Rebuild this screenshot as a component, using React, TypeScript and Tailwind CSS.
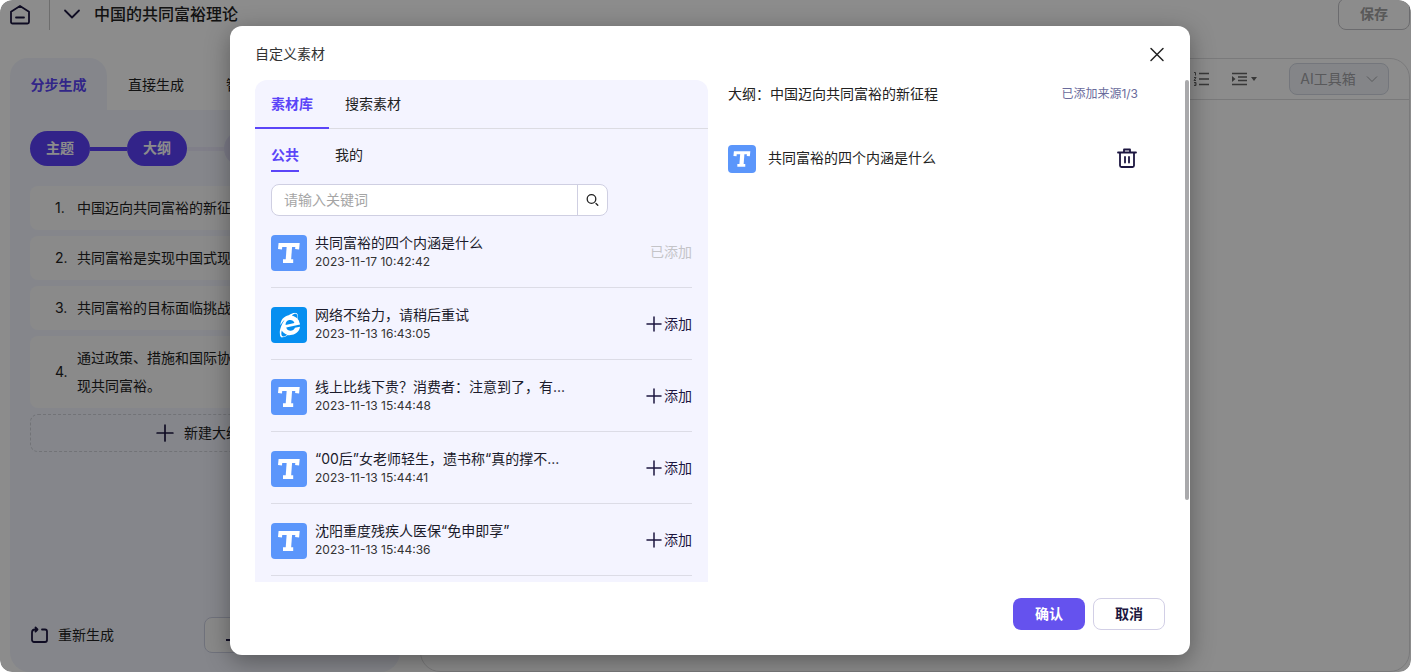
import React from 'react';
import { FaInternetExplorer } from 'react-icons/fa';

type Material = {
  title: string;
  time: string;
  kind: 'text' | 'web';
  added?: boolean;
};

const materials: Material[] = [
  { title: '共同富裕的四个内涵是什么', time: '2023-11-17 10:42:42', kind: 'text', added: true },
  { title: '网络不给力，请稍后重试', time: '2023-11-13 16:43:05', kind: 'web' },
  { title: '线上比线下贵？消费者：注意到了，有...', time: '2023-11-13 15:44:48', kind: 'text' },
  { title: '“00后”女老师轻生，遗书称“真的撑不...', time: '2023-11-13 15:44:41', kind: 'text' },
  { title: '沈阳重度残疾人医保“免申即享”', time: '2023-11-13 15:44:36', kind: 'text' },
];

const outline = [
  '中国迈向共同富裕的新征程',
  '共同富裕是实现中国式现代化',
  '共同富裕的目标面临挑战',
  '通过政策、措施和国际协作，实现共同富裕。',
];

function PlusIcon({ className }: { className: string }) {
  return (
    <svg viewBox="0 0 16 16" fill="none" stroke="currentColor" strokeWidth="1.5" strokeLinecap="round" className={className}>
      <path d="M8 1v14M1 8h14" />
    </svg>
  );
}

function TextBadge({ small }: { small?: boolean }) {
  return (
    <svg viewBox="0 0 36 36" fill="none" stroke="#fff" className={`shrink-0 rounded bg-[#5b96fb] ${small ? 'size-7' : 'size-9'}`}>
      <path strokeWidth="4" d="M9 14.200 9.400 10H26.500l-.4 4.200" />
      <path strokeWidth="5.400" d="M18.500 10 17.300 26" />
      <path strokeWidth="3.800" d="M12 26.200h10.200" />
    </svg>
  );
}

function WebBadge() {
  return (
    <span className="flex size-9 shrink-0 items-center justify-center rounded bg-[#068ff0] text-white">
      <FaInternetExplorer className="size-[22px] -rotate-12" />
    </span>
  );
}

function TopBar() {
  return (
    <header className="-mt-0.5 flex h-8 items-center">
      <button aria-label="首页" className="ml-[9px] text-[#1c1640]">
        <svg viewBox="0 0 22 22" fill="none" stroke="currentColor" strokeWidth="1.8" strokeLinejoin="round" strokeLinecap="round" className="size-[22px]">
          <path d="M2 8.800 11 3l9 5.800V19a1.500 1.500 0 0 1-1.500 1.500h-15A1.500 1.500 0 0 1 2 19zM7 14.500h8" />
        </svg>
      </button>
      <div className="ml-[18px] h-full w-px bg-[#c8c8c8]" />
      <button aria-label="展开" className="ml-[13px] text-[#1c1640]">
        <svg viewBox="0 0 18 18" fill="none" stroke="currentColor" strokeWidth="1.8" strokeLinecap="round" strokeLinejoin="round" className="size-[18px]">
          <path d="m2 5.500 7 7 7-7" />
        </svg>
      </button>
      <h1 className="ml-[13px] text-base font-medium leading-6 text-[#222]">中国的共同富裕理论</h1>
      <button className="ml-auto mr-px h-8 w-[72px] rounded-lg border border-[#c3c3c8] text-sm font-bold text-[#a2a2a2]">保存</button>
    </header>
  );
}

function Sidebar() {
  return (
    <aside className="flex w-[390px] shrink-0 flex-col">
      <nav className="flex h-[52px] pt-px text-sm">
        <button className="-mt-px w-[97px] rounded-t-[18px] bg-[#f2f5fe] pt-0.5 font-bold text-[#5b45f8]">分步生成</button>
        <button className="w-[98px] text-[#222]">直接生成</button>
        <button className="w-[98px] text-[#222]">智能改写</button>
      </nav>
      <div className="flex flex-1 flex-col rounded-b-[20px] rounded-tr-[20px] bg-[#f2f5fe] px-5 pt-[21px] pb-[19px] text-sm text-[#222]">
        <div className="flex h-[35px] items-center text-white">
          <button className="h-full w-[60px] rounded-full bg-[#5b41f9] pb-0.5 font-bold">主题</button>
          <span className="h-1 w-[37px] bg-[#5b41f9]" />
          <button className="h-full w-[60px] rounded-full bg-[#5b41f9] pb-0.5 font-bold">大纲</button>
          <span className="h-1 w-[37px] bg-[#e9e8fa]" />
          <button className="h-full w-[60px] rounded-full bg-[#e2e0f8] pb-0.5 font-bold">全文</button>
        </div>
        <ol className="mt-5 flex flex-col gap-1.5">
          {outline.map((text, i) => (
            <li key={text} className="flex items-center rounded-lg bg-[#fbfbfb] py-2 pl-[25px] leading-7">
              <span className="w-[22px] shrink-0">{i + 1}.</span>
              <span className="w-[200px]">{text}</span>
            </li>
          ))}
        </ol>
        <button className="mt-1.5 flex h-[38px] items-center justify-center gap-2.5 rounded-lg border border-dashed border-[#cfd1d9]">
          <PlusIcon className="size-[18px] text-[#1c1640]" />
          新建大纲项
        </button>
        <div className="mt-auto flex h-9 items-center justify-between">
          <button className="flex items-center gap-2.5">
            <svg viewBox="0 0 18 18" fill="none" stroke="#1c1640" strokeWidth="1.8" strokeLinecap="round" strokeLinejoin="round" className="size-[18px]">
              <path d="M12 3.500h3a2 2 0 0 1 2 2V14a2 2 0 0 1-2 2H4a2 2 0 0 1-2-2V6.500a3 3 0 0 1 3-3h2M5.500 1.500l2 2-2 2" />
            </svg>
            重新生成
          </button>
          <button className="flex h-9 w-44 items-center gap-2 rounded-lg border border-[#cccfe2] bg-[#fafafa] pl-5">
            <svg viewBox="0 0 18 18" fill="none" stroke="#1c1640" strokeWidth="1.8" className="size-[18px]">
              <path d="M1 14h16M10 2v8M7 7l3 3 3-3" />
            </svg>
            生成全文
          </button>
        </div>
      </div>
    </aside>
  );
}

function Editor() {
  return (
    <main className="flex min-w-0 flex-1 flex-col rounded-[20px] border border-[#dedee0]">
      <div className="flex h-[41px] items-center justify-end border-b border-[#dcdcde] pr-5 text-[#666]">
        <button aria-label="有序列表" className="mr-[22px]">
          <svg viewBox="0 0 16 16" fill="none" stroke="currentColor" strokeWidth="1.5" className="size-4">
            <path d="M6 2.500h10M6 8h10M6 13.500h10" />
            <path strokeWidth="1" d="M1 1.500h1.500v3M1 6.500h2L1 9.500h2M1 11.500h2v3H1M1.500 13H3" />
          </svg>
        </button>
        <button aria-label="缩进" className="mr-8 flex items-center gap-1">
          <svg viewBox="0 0 16 16" fill="none" stroke="currentColor" strokeWidth="1.5" className="size-4">
            <path d="M1 2.500h15M7 6h9M7 9.500h9M1 13.500h15" />
            <path fill="currentColor" stroke="none" d="M1 5v6l3.500-3z" />
          </svg>
          <svg viewBox="0 0 6 4" fill="currentColor" className="h-1 w-1.5">
            <path d="M0 0h6L3 4z" />
          </svg>
        </button>
        <button className="flex h-8 w-[100px] items-center justify-center gap-2.5 rounded-lg border border-[#d3d8e2] bg-[#f0f3f8] text-sm text-[#a2a2a6]">
          AI工具箱
          <svg viewBox="0 0 12 12" fill="none" stroke="currentColor" className="size-3">
            <path d="m1 3.500 5 5 5-5" />
          </svg>
        </button>
      </div>
    </main>
  );
}

function Library() {
  return (
    <section className="flex h-full w-[453px] shrink-0 flex-col overflow-hidden rounded-t-xl bg-[#f4f4ff]">
      <div className="flex h-[49px] shrink-0 border-b border-[#dcdce2] text-sm">
        <button className="-mb-px w-[74px] border-b-2 border-[#5b45f8] font-bold text-[#5b45f8]">素材库</button>
        <button className="px-4 text-[#222]">搜索素材</button>
      </div>
      <div className="px-4">
        <div className="flex gap-9 pt-2.5 text-sm">
          <button className="h-[33px] border-b-2 border-[#5b45f8] font-bold text-[#5b45f8]">公共</button>
          <button className="h-[33px] border-b-2 border-transparent text-[#222]">我的</button>
        </div>
        <form className="mt-3 flex h-8 w-[337px] overflow-hidden rounded-lg border border-[#cfcfe2] bg-white">
          <input
            aria-label="关键词"
            placeholder="请输入关键词"
            className="min-w-0 flex-1 px-3 text-sm text-[#222] outline-none placeholder:text-[#a5a5a5]"
          />
          <button type="button" aria-label="搜索" className="flex w-[30px] items-center justify-center border-l border-[#cfcfe2] text-[#222]">
            <svg viewBox="0 0 14 14" fill="none" stroke="currentColor" strokeWidth="1.3" strokeLinecap="round" className="size-3.5">
              <circle cx="5.500" cy="6" r="4.300" />
              <path d="m10 10.500 1.800 1.800" />
            </svg>
          </button>
        </form>
        <ul>
          {materials.map((m) => (
            <li key={m.title} className="flex items-center border-b border-[#dcdce6] pt-[19px] pb-4">
              {m.kind === 'web' ? <WebBadge /> : <TextBadge />}
              <div className="ml-2 flex flex-1 flex-col gap-[3px] self-start">
                <p className="text-sm leading-4 text-[#1b1b2b]">{m.title}</p>
                <time className="text-xs leading-4 text-[#333]">{m.time}</time>
              </div>
              {m.added ? (
                <span className="pb-0.5 text-sm text-[#c4c4c8]">已添加</span>
              ) : (
                <button className="flex items-center gap-0.5 pb-0.5 text-sm text-[#1c1640]">
                  <PlusIcon className="size-4" />
                  添加
                </button>
              )}
            </li>
          ))}
        </ul>
      </div>
    </section>
  );
}

function Selected() {
  return (
    <section className="ml-5 mr-[27px] flex-1 text-sm text-[#222]">
      <div className="flex h-7 items-center justify-between">
        <h3>大纲：中国迈向共同富裕的新征程</h3>
        <span className="text-xs text-[#6a6b9c]">已添加来源1/3</span>
      </div>
      <div className="mt-[37px] flex items-center">
        <TextBadge small />
        <span className="ml-3 pb-0.5">共同富裕的四个内涵是什么</span>
        <button aria-label="删除" className="ml-auto pb-0.5 text-[#1c1640]">
          <svg viewBox="0 0 22 22" fill="none" stroke="currentColor" strokeWidth="1.8" strokeLinecap="round" strokeLinejoin="round" className="size-[22px]">
            <path d="M2 5.500h18M8 5V2.500h6V5M4 6v12.500A1.500 1.500 0 0 0 5.500 20h11a1.500 1.500 0 0 0 1.500-1.500V6M9 10v5.500M13 10v5.500" />
          </svg>
        </button>
      </div>
    </section>
  );
}

function MaterialDialog() {
  return (
    <div role="dialog" aria-label="自定义素材" className="w-[960px] rounded-xl bg-white shadow-[0_6px_24px_rgba(0,0,0,0.35)]">
      <div className="flex h-[54px] items-center justify-between px-[25px] pt-0.5">
        <h2 className="text-sm text-[#333]">自定义素材</h2>
        <button aria-label="关闭" className="text-[#222]">
          <svg viewBox="0 0 16 16" fill="none" stroke="currentColor" strokeWidth="1.5" strokeLinecap="round" className="size-4">
            <path d="M2 2.500 14 14.500M14 2.500 2 14.500" />
          </svg>
        </button>
      </div>
      <div className="relative flex h-[502px] px-[25px]">
        <Library />
        <Selected />
        <div className="absolute right-px top-0 h-[420px] w-1 rounded-full bg-[#a9a9ab]" />
      </div>
      <div className="flex justify-end gap-2 px-[25px] pt-4 pb-[25px] text-sm font-bold">
        <button className="h-8 w-[72px] rounded-lg bg-[#6552ee] text-white">确认</button>
        <button className="h-8 w-[72px] rounded-lg border border-[#d2cfe6] text-[#1c1640]">取消</button>
      </div>
    </div>
  );
}

export default function App() {
  return (
    <div className="relative flex h-screen flex-col overflow-hidden rounded-xl bg-white font-[Inter,'Noto_Sans_CJK_SC',sans-serif]">
      <TopBar />
      <div className="mt-7 flex min-h-0 flex-1 gap-5 pl-2.5 pr-px">
        <Sidebar />
        <Editor />
      </div>
      <div className="absolute inset-0 flex items-start justify-center rounded-xl bg-black/45 pt-[26px] pl-[9px]">
        <MaterialDialog />
      </div>
    </div>
  );
}
